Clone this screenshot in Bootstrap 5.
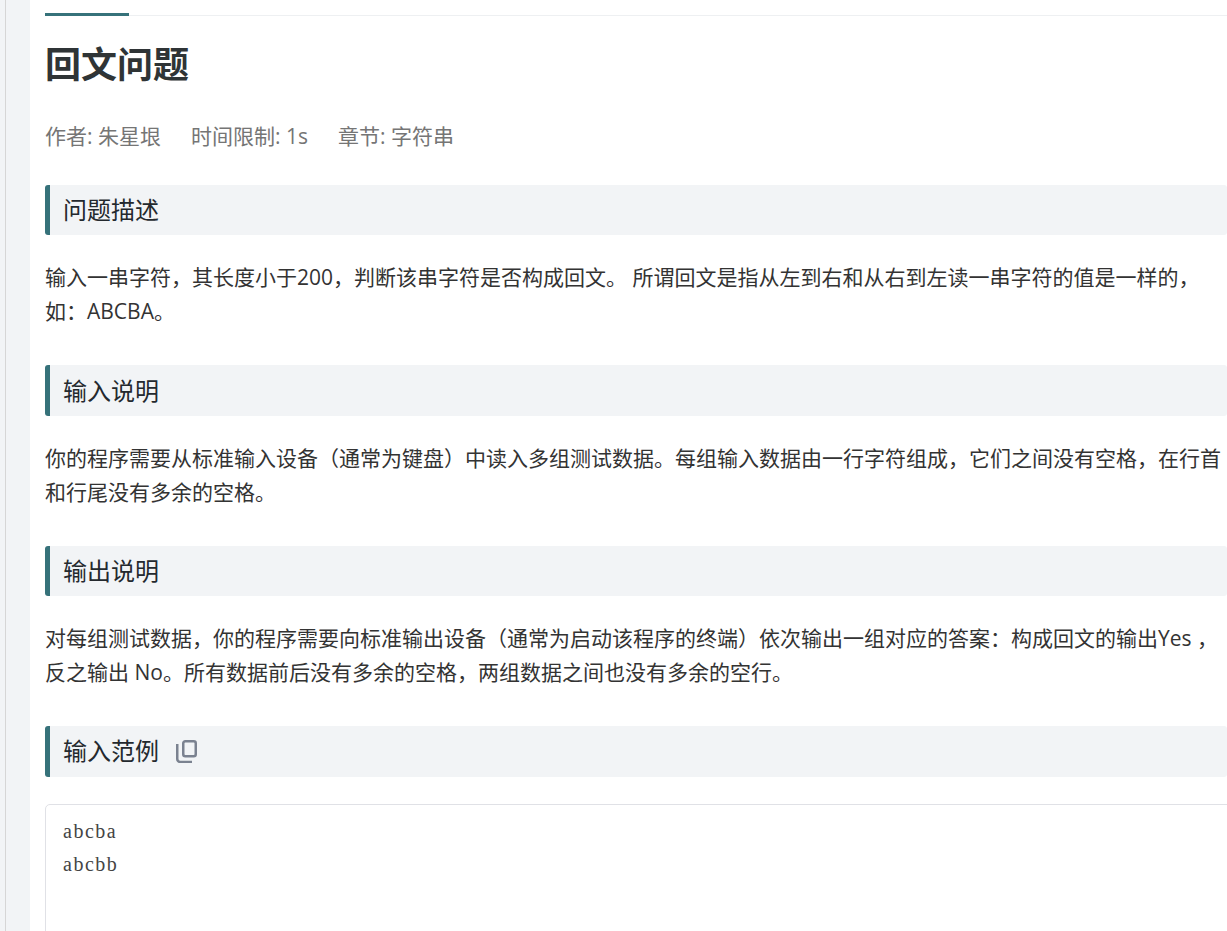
<!DOCTYPE html>
<html lang="zh">
<head>
<meta charset="utf-8">
<title>回文问题</title>
<link href="https://cdn.jsdelivr.net/npm/bootstrap@5.3.0/dist/css/bootstrap.min.css" rel="stylesheet">
<style>
html,body{height:100%;overflow:hidden;}
body{background:#f2f4f6;font-family:"Open Sans","Noto Sans CJK SC",sans-serif;color:#24292e;}
.rail-line{width:1px;background:#d6d6d6;margin-left:5px;margin-right:24px;flex:none;}
.sheet{background:#fff;padding:13px 0 0 15px;min-width:0;flex:1 0 auto;width:1197px;}
.tab-row{border-bottom:1px solid #eef0f2;position:relative;height:3px;}
.tab-on{width:84px;height:3px;background:#36727a;}
.prob-title{font-size:36px;font-weight:700;line-height:50px;color:#2f3436;margin:24px 0 0;}
.prob-meta{font-size:21px;line-height:30px;color:#757575;margin-top:31px;gap:30px;}
.sec-head{font-size:24px;font-weight:400;line-height:36px;padding:7.2px 13px;border-left:5px solid #36727a;border-radius:3px;background:#f2f4f6;color:#24292e;margin:0;width:1182px;}
.sec-first{margin-top:34px;}
.sec-text{font-size:21px;line-height:34px;color:#333;margin:25px 0 37px;width:1183px;}
.copy-ico{width:22px;height:24px;margin-left:17px;vertical-align:-3px;}
.code-box{font-family:"Liberation Serif",serif;font-size:20px;letter-spacing:1.5px;line-height:33px;color:#444;border:1px solid #e0e1e6;border-radius:5px;padding:10px 17px;margin:27px 0 0;width:1190px;height:240px;overflow:hidden;}
</style>
</head>
<body class="d-flex">
<div class="rail-line"></div>
<main class="sheet">
  <div class="tab-row"><div class="tab-on"></div></div>
  <h1 class="prob-title">回文问题</h1>
  <div class="prob-meta d-flex"><span>作者: 朱星垠</span><span>时间限制: 1s</span><span>章节: 字符串</span></div>
  <h2 class="sec-head sec-first">问题描述</h2>
  <p class="sec-text">输入一串字符，其长度小于200，判断该串字符是否构成回文。 所谓回文是指从左到右和从右到左读一串字符的值是一样的，如：ABCBA。</p>
  <h2 class="sec-head">输入说明</h2>
  <p class="sec-text">你的程序需要从标准输入设备（通常为键盘）中读入多组测试数据。每组输入数据由一行字符组成，它们之间没有空格，在行首和行尾没有多余的空格。</p>
  <h2 class="sec-head">输出说明</h2>
  <p class="sec-text">对每组测试数据，你的程序需要向标准输出设备（通常为启动该程序的终端）依次输出一组对应的答案：构成回文的输出Yes ，反之输出 No。所有数据前后没有多余的空格，两组数据之间也没有多余的空行。</p>
  <h2 class="sec-head">输入范例<svg class="copy-ico" viewBox="0 0 22 24" fill="none" stroke="#7b8290" stroke-width="2.5"><rect x="7.25" y="2.25" width="12.5" height="15" rx="2"/><path d="M1.25 5v15a3 3 0 0 0 3 3H16"/></svg></h2>
  <pre class="code-box">abcba
abcbb</pre>
</main>
<script src="https://cdn.jsdelivr.net/npm/bootstrap@5.3.0/dist/js/bootstrap.bundle.min.js"></script>
</body>
</html>
